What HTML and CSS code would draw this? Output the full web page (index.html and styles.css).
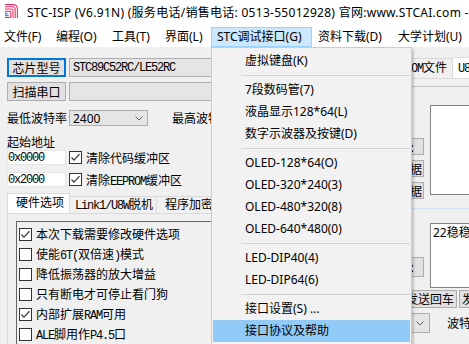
FILE: index.html
```html
<!DOCTYPE html>
<html lang="zh-CN">
<head>
<meta charset="utf-8">
<title>STC-ISP</title>
<link rel="stylesheet" href="styles.css">
</head>
<body>
<div class="win">
  <div class="titlebar">
    <svg class="logo" viewBox="0 0 13 14" width="13" height="14">
      <g fill="none" stroke="#e8336b" stroke-width="1.1">
        <path d="M0 0.6 H8 Q12.4 0.6 12.4 5 V14"/>
        <path d="M0 2.8 H7.2 Q10.2 2.8 10.2 5.8 V14"/>
        <path d="M0 5 H6.4 Q8 5 8 6.6 V14"/>
        <path d="M0 7.2 H5 Q5.8 7.2 5.8 8 V14"/>
      </g>
      <g fill="none" stroke="#1e5cc8" stroke-width="1.1">
        <path d="M0 13.4 H4.6"/>
        <path d="M0 11.2 H3.6"/>
        <path d="M0 9.2 H2.4"/>
      </g>
    </svg>
    <span class="title">STC-ISP (V6.91N) (服务电话/销售电话: 0513-55012928) 官网:www.STCAI.com - </span>
  </div>

  <div class="menubar">
    <span class="mi m1">文件(F)</span>
    <span class="mi m2">编程(O)</span>
    <span class="mi m3">工具(T)</span>
    <span class="mi m4">界面(L)</span>
    <span class="mi m5 open">STC调试接口(G)</span>
    <span class="mi m6">资料下载(D)</span>
    <span class="mi m7">大学计划(U)</span>
  </div>

  <div class="main">
    <div class="left">
      <div class="row r1">
        <div class="btn focus">芯片型号</div>
        <div class="combo"><span class="mono">STC89C52RC/LE52RC</span></div>
      </div>
      <div class="row r2">
        <div class="btn">扫描串口</div>
        <div class="combo"></div>
      </div>
      <div class="row r3">
        <span class="lbl-w">最低波特率</span>
        <div class="combo small"><span class="cval">2400</span>
          <svg class="chev" width="8" height="5" viewBox="0 0 8 5"><polyline points="0.5,0.5 4,4 7.5,0.5" fill="none" stroke="#606060" stroke-width="1"/></svg>
        </div>
        <span class="lbl-hi">最高波特率</span>
      </div>
      <div class="lbl4">起始地址</div>
      <div class="row r5">
        <div class="input"><span class="mono">0x0000</span></div>
        <span class="cb on"><svg width="11" height="11" viewBox="0 0 11 11"><polyline points="1.5,5.5 4,8.2 9.5,2.2" fill="none" stroke="#333" stroke-width="1.2"/></svg></span>
        <span class="cbl">清除代码缓冲区</span>
      </div>
      <div class="row r6">
        <div class="input"><span class="mono">0x2000</span></div>
        <span class="cb on"><svg width="11" height="11" viewBox="0 0 11 11"><polyline points="1.5,5.5 4,8.2 9.5,2.2" fill="none" stroke="#333" stroke-width="1.2"/></svg></span>
        <span class="cbl">清除<span class="mono">EEPROM</span>缓冲区</span>
      </div>
      <div class="tabs">
        <div class="tab active t1">硬件选项</div>
        <div class="tab t2"><span class="mono">Link1/U8W</span>脱机</div>
        <div class="tab t3">程序加密后传输</div>
      </div>
      <div class="tabpage">
        <div class="list">
          <div class="li"><span class="cb on"><svg width="11" height="11" viewBox="0 0 11 11"><polyline points="1.5,5.5 4,8.2 9.5,2.2" fill="none" stroke="#333" stroke-width="1.2"/></svg></span><span>本次下载需要修改硬件选项</span></div>
          <div class="li"><span class="cb"></span><span>使能<span class="mono">6T(</span>双倍速<span class="mono">)</span>模式</span></div>
          <div class="li"><span class="cb"></span><span>降低振荡器的放大增益</span></div>
          <div class="li"><span class="cb"></span><span>只有断电才可停止看门狗</span></div>
          <div class="li"><span class="cb on"><svg width="11" height="11" viewBox="0 0 11 11"><polyline points="1.5,5.5 4,8.2 9.5,2.2" fill="none" stroke="#333" stroke-width="1.2"/></svg></span><span>内部扩展<span class="mono">RAM</span>可用</span></div>
          <div class="li"><span class="cb"></span><span><span class="mono">ALE</span>脚用作<span class="mono">P4.5</span>口</span></div>
        </div>
      </div>
    </div>

    <div class="right">
      <div class="rtabs">
        <div class="rtab r-in">EEP<span class="mono">ROM</span>文件</div>
        <div class="rtab r-act"><span class="mono">U8W/U8</span></div>
      </div>
      <div class="rpage"></div>
      <div class="rline"></div>
      <div class="recv">
        <div class="rbtns">
          <div class="sbtn">区 :</div>
          <div class="sbtn">复制接收数据</div>
          <div class="sbtn">保存接收数据</div>
        </div>
        <div class="tbox recvbox"></div>
      </div>
      <div class="bluel"></div>
      <div class="send">
        <div class="sbtns">
          <div class="sbtn tall">区 :</div>
        </div>
        <div class="tbox sendbox">22稳稳</div>
      </div>
      <div class="brow">
        <div class="pbtn">发送回车</div>
        <div class="pbtn">发送数据</div>
      </div>
      <div class="brow2">
        <div class="combo rcombo">
          <svg class="chev" width="8" height="5" viewBox="0 0 8 5"><polyline points="0.5,0.5 4,4 7.5,0.5" fill="none" stroke="#606060" stroke-width="1"/></svg>
        </div>
        <span class="bt">波特率</span>
      </div>
    </div>
  </div>

  <div class="dd">
    <div class="di">虚拟键盘(K)</div>
    <div class="ds"></div>
    <div class="di">7段数码管(7)</div>
    <div class="di">液晶显示128*64(L)</div>
    <div class="di">数字示波器及按键(D)</div>
    <div class="ds"></div>
    <div class="di">OLED-128*64(O)</div>
    <div class="di">OLED-320*240(3)</div>
    <div class="di">OLED-480*320(8)</div>
    <div class="di">OLED-640*480(0)</div>
    <div class="ds"></div>
    <div class="di">LED-DIP40(4)</div>
    <div class="di">LED-DIP64(6)</div>
    <div class="ds"></div>
    <div class="di">接口设置(S) ...</div>
    <div class="di hot">接口协议及帮助</div>
  </div>
</div>
</body>
</html>
```

FILE: styles.css
```css
* { box-sizing: border-box; margin: 0; padding: 0; }
html, body { width: 469px; height: 344px; overflow: hidden; }
body {
  font: 12px "Noto Sans", "Noto Sans CJK SC", sans-serif;
  color: #000;
  background: #f0f0f0;
}
.win { position: relative; width: 469px; height: 344px; overflow: hidden; background: #f0f0f0; }

.mono { font-family: "Liberation Mono", "Noto Sans CJK SC", monospace; font-size: 12px; letter-spacing: -1.2px; }

/* title bar */
.titlebar { height: 27px; background: #fff; display: flex; align-items: flex-start; padding-left: 5px; white-space: nowrap; overflow: hidden; }
.logo { flex: none; margin-top: 4px; margin-right: 9px; }
.title { line-height: 26px; letter-spacing: 0.28px; }

/* menu bar */
.menubar { height: 20px; background: #fff; display: flex; white-space: nowrap; }
.mi { flex: none; height: 20px; line-height: 20px; padding-left: 7px; }
.m1 { width: 49px; padding-left: 4px; }
.m2 { width: 56px; }
.m3 { width: 53px; }
.m4 { width: 53px; }
.m5 { width: 101px; padding-left: 5px; }
.m6 { width: 79px; padding-left: 6px; }
.m7 { width: 78px; }
.mi.open { background: #cce8ff; border: 1px solid #99d1ff; line-height: 18px; }

/* main */
.main { display: flex; height: 297px; }
.left { width: 340px; flex: none; overflow: hidden; padding-left: 7px; }
.right { width: 129px; flex: none; overflow: hidden; }

.row { display: flex; align-items: center; white-space: nowrap; }
.r1 { margin-top: 11px; height: 19px; gap: 3px; }
.r2 { margin-top: 5px; height: 19px; gap: 3px; }
.btn { flex: none; width: 59px; height: 19px; background: #e1e1e1; border: 1px solid #adadad; display: flex; align-items: center; justify-content: center; }
.btn.focus { border: 2px solid #0078d7; }
.combo { flex: none; width: 260px; height: 19px; background: #e5e5e5; border: 1px solid #adadad; padding-left: 3px; display: flex; align-items: center; }

.r3 { margin-top: 9px; height: 16px; }
.lbl-w { width: 62px; flex: none; }
.combo.small { width: 79px; height: 16px; justify-content: space-between; padding-right: 4px; }
.cval { font-size: 12px; }
.chev { flex: none; }
.lbl-hi { margin-left: 24px; }

.lbl4 { margin-top: 10px; height: 14px; line-height: 14px; }
.r5 { height: 15px; }
.r6 { margin-top: 7px; height: 15px; }
.input { flex: none; width: 59px; height: 15px; background: #fff; border: 1px solid #e6e6e6; display: flex; align-items: center; margin-right: 3px; }
.cb { flex: none; width: 13px; height: 13px; border: 1px solid #333; background: #fff; display: flex; align-items: center; justify-content: center; }
.cbl { margin-left: 4px; }

.tabs { margin-top: 6px; height: 20px; display: flex; align-items: flex-end; white-space: nowrap; }
.tab { flex: none; height: 17px; border: 1px solid #d9d9d9; border-bottom: none; background: #f0f0f0; padding-left: 5px; line-height: 16px; }
.tab.active { height: 20px; background: #fff; padding-left: 8px; line-height: 18px; }
.t1 { width: 63px; }
.t2 { width: 87px; border-left: none; }
.t3 { width: 110px; border-left: none; padding-left: 8px; }

.tabpage { border-top: 1px solid #d9d9d9; border-left: 1px solid #d9d9d9; padding: 7px 0 0 8px; height: 200px; }
.list { border-left: 1px solid #646464; border-top: 1px solid #646464; padding: 2px 0 0 2px; height: 200px; }
.li { height: 20px; display: flex; align-items: center; gap: 4px; white-space: nowrap; }

/* right column */
.rtabs { margin-top: 10px; height: 21px; display: flex; align-items: flex-end; white-space: nowrap; }
.rtab { flex: none; border: 1px solid #d9d9d9; border-bottom: none; }
.r-in { width: 113px; height: 20px; background: #f0f0f0; text-align: right; padding-right: 5px; line-height: 18px; }
.r-act { width: 100px; height: 21px; background: #fff; padding-left: 5px; line-height: 19px; border-left: none; }
.rpage { height: 8px; border-top: 1px solid #d9d9d9; }
.rline { height: 1px; background: #c4c4c4; }

.recv { margin-top: 18px; display: flex; gap: 6px; height: 94px; }
.rbtns { width: 84px; flex: none; padding-top: 33px; }
.sbtn { height: 17px; margin-bottom: 5px; background: #e1e1e1; border: 1px solid #adadad; display: flex; align-items: center; justify-content: flex-end; padding-right: 1px; white-space: nowrap; overflow: hidden; }
.rbtns .sbtn:first-child { padding-right: 9px; }
.tbox { flex: none; width: 100px; background: #fff; border: 1px solid #828282; }
.recvbox { height: 90px; }
.bluel { margin-top: 9px; height: 1px; background: #cfe2f3; }

.send { margin-top: 14px; display: flex; gap: 6px; height: 65px; }
.sbtns { width: 84px; flex: none; padding-top: 34px; }
.sbtn.tall { height: 20px; padding-right: 9px; }
.sendbox { height: 65px; padding: 1px 2px; line-height: 16px; }

.brow { margin-top: 2px; display: flex; gap: 2px; padding-left: 63px; height: 18px; }
.pbtn { flex: none; width: 54px; height: 18px; background: #e1e1e1; border: 1px solid #adadad; display: flex; align-items: center; justify-content: center; white-space: nowrap; }

.brow2 { margin-top: 5px; display: flex; align-items: center; height: 20px; white-space: nowrap; }
.rcombo { width: 90px; height: 20px; justify-content: flex-end; padding-right: 5px; }
.bt { margin-left: 17px; }

/* dropdown menu */
.dd { position: absolute; left: 211px; top: 47px; width: 201px; height: 310px; background: #f2f2f2; border: 1px solid #cccccc; padding: 2px 1px; box-shadow: 2px 2px 2px rgba(0,0,0,0.18); white-space: nowrap; }
.di { height: 22px; line-height: 22px; padding-left: 32px; }
.di.hot { background: #91c9f7; }
.ds { height: 7px; display: flex; align-items: center; padding-left: 28px; }
.ds::after { content: ""; flex: 1; height: 1px; background: #d2d2d2; }
```
